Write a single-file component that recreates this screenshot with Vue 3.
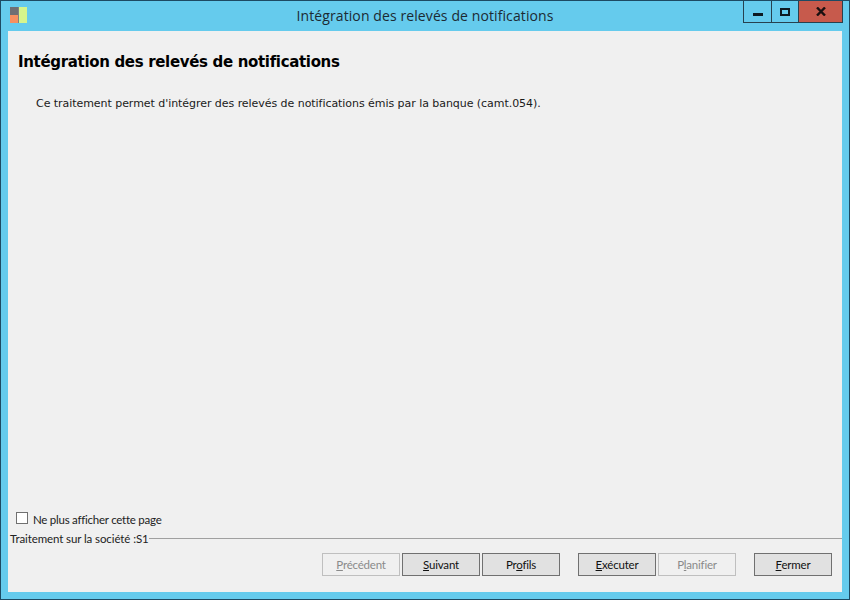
<script setup>
const groupA = [
  { pre: '', key: 'P', post: 'récédent', off: true },
  { pre: '', key: 'S', post: 'uivant' },
  { pre: 'Pr', key: 'o', post: 'fils' }
]
const groupB = [
  { pre: '', key: 'E', post: 'xécuter' },
  { pre: 'P', key: 'l', post: 'anifier', off: true }
]
const groupC = [{ pre: '', key: 'F', post: 'ermer' }]
</script>

<template>
  <div class="window">
    <header class="titlebar">
      <svg class="logo" width="17" height="17" viewBox="0 0 17 17">
        <rect x="0" y="0" width="8" height="8" fill="#6f6f73" />
        <rect x="0" y="8" width="8" height="8" fill="#f79060" />
        <rect x="8" y="0" width="1" height="16" fill="#808080" />
        <rect x="9" y="0" width="8" height="16" fill="#d6f58c" />
      </svg>
      <h1 class="wintitle">Intégration des relevés de notifications</h1>
      <div class="controls">
        <div class="ctl ctl-min"><span class="glyph-min"></span></div>
        <div class="ctl ctl-max"><span class="glyph-max"></span></div>
        <div class="ctl ctl-close">
          <svg width="10" height="9" viewBox="0 0 10 9">
            <path d="M1 0.5 L9 8.5 M9 0.5 L1 8.5" stroke="#1a1010" stroke-width="2.4" fill="none" />
          </svg>
        </div>
      </div>
    </header>
    <main class="client">
      <h2 class="heading">Intégration des relevés de notifications</h2>
      <p class="desc">Ce traitement permet d'intégrer des relevés de notifications émis par la banque (camt.054).</p>
      <div class="spacer"></div>
      <label class="check"><span class="box"></span><span>Ne plus afficher cette page</span></label>
      <div class="legend"><span>Traitement sur la société :S1</span><span class="rule"></span></div>
      <div class="actions">
        <div class="group">
          <button v-for="b in groupA" :key="b.post" class="btn" :class="{ off: b.off }">{{ b.pre }}<u>{{ b.key }}</u>{{ b.post }}</button>
        </div>
        <div class="group">
          <button v-for="b in groupB" :key="b.post" class="btn" :class="{ off: b.off }">{{ b.pre }}<u>{{ b.key }}</u>{{ b.post }}</button>
        </div>
        <div class="group">
          <button v-for="b in groupC" :key="b.post" class="btn">{{ b.pre }}<u>{{ b.key }}</u>{{ b.post }}</button>
        </div>
      </div>
    </main>
  </div>
</template>

<style>
html, body { margin: 0; padding: 0; }
</style>

<style scoped>
.window {
  box-sizing: border-box;
  width: 850px;
  height: 600px;
  background: #65cbed;
  border: 1px solid #1d4a63;
  display: flex;
  flex-direction: column;
  padding: 0 7px 7px;
  overflow: hidden;
}
.titlebar {
  height: 30px;
  flex: none;
  display: grid;
  grid-template-columns: 1fr auto 1fr;
  align-items: start;
}
.logo { margin: 6px 0 0 2px; }
.wintitle {
  margin: 0;
  text-align: center;
  font: 400 14px/29px "Open Sans", sans-serif;
  letter-spacing: 0.1px;
  color: #1c2a33;
}
.controls {
  justify-self: end;
  display: flex;
  height: 22px;
  margin-right: -1px;
  border: 1px solid #27414f;
  border-top: none;
  box-sizing: border-box;
}
.ctl {
  display: flex;
  align-items: center;
  justify-content: center;
  box-sizing: border-box;
}
.ctl-min { width: 28px; border-right: 1px solid #27414f; }
.ctl-max { width: 26px; }
.ctl-close { width: 44px; background: #c75a4c; border-left: 1px solid #27414f; }
.glyph-min { width: 10px; height: 3px; background: #0d1a22; margin-top: 5px; }
.glyph-max { box-sizing: border-box; width: 10px; height: 8px; border: 2px solid #0d1a22; }
.client {
  flex: 1;
  min-height: 0;
  background: #f0f0f0;
  display: flex;
  flex-direction: column;
  padding: 0 0 16px;
  font: 400 11.5px/14px "Lato", sans-serif;
  font-variant-ligatures: none;
  color: #1a1a1a;
}
.heading {
  margin: 21px 0 0 10px;
  font: 700 15px/20px "DejaVu Sans", sans-serif;
  letter-spacing: -0.33px;
  color: #000;
}
.desc {
  margin: 25px 0 0 28px;
  font: 400 11px/14px "DejaVu Sans", sans-serif;
  letter-spacing: -0.05px;
}
.spacer { flex: 1; }
.check {
  display: flex;
  align-items: center;
  gap: 5px;
  margin: 0 0 3px 8px;
  height: 14px;
  letter-spacing: -0.25px;
  color: #222;
}
.box {
  box-sizing: border-box;
  width: 12px;
  height: 12px;
  background: #fff;
  border: 1px solid #707070;
  margin-top: -4px;
}
.legend {
  display: flex;
  align-items: center;
  margin: 3px 0 0 2px;
  height: 12px;
  letter-spacing: -0.1px;
  color: #222;
}
.rule { flex: 1; height: 1px; background: #a0a0a0; margin-top: -1px; }
.actions {
  display: flex;
  justify-content: flex-end;
  gap: 18px;
  margin: 8px 10px 0 0;
}
.group { display: flex; gap: 2px; }
.btn {
  box-sizing: border-box;
  width: 78px;
  height: 23px;
  padding: 1px 0 0;
  background: #e1e1e1;
  border: 1px solid #707070;
  border-radius: 0;
  font: 400 11.5px/14px "Lato", sans-serif;
  font-variant-ligatures: none;
  letter-spacing: -0.2px;
  color: #111;
}
.btn.off {
  background: #f0f0f0;
  border-color: #bfbfbf;
  color: #8a8a8a;
}
</style>
